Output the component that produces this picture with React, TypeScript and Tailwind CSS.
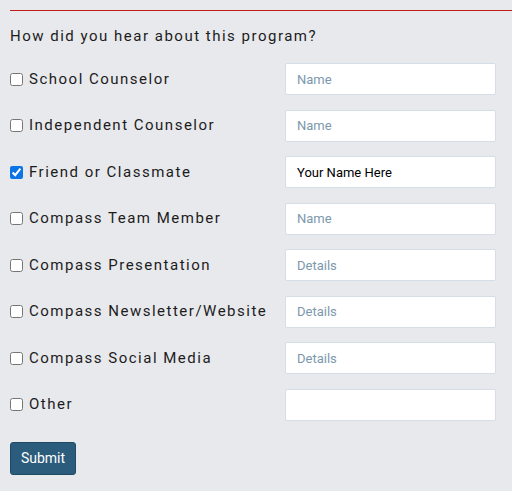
import React from "react";

const rows = [
  { label: "School Counselor", placeholder: "Name", value: "", checked: false },
  { label: "Independent Counselor", placeholder: "Name", value: "", checked: false },
  { label: "Friend or Classmate", placeholder: "Name", value: "Your Name Here", checked: true },
  { label: "Compass Team Member", placeholder: "Name", value: "", checked: false },
  { label: "Compass Presentation", placeholder: "Details", value: "", checked: false },
  { label: "Compass Newsletter/Website", placeholder: "Details", value: "", checked: false },
  { label: "Compass Social Media", placeholder: "Details", value: "", checked: false },
  { label: "Other", placeholder: "", value: "", checked: false },
];

export default function App() {
  return (
    <div
      className="w-[512px] h-[491px] bg-[#e8e9ed] pl-[10px] pt-[10px] text-[#1c1c1c]"
      style={{ fontFamily: "Roboto, 'Liberation Sans', sans-serif" }}
    >
      <div className="border-t border-[#c41a1a]" />
      <p className="mt-[15px] text-[15px] leading-[20px] tracking-[1.5px]">
        How did you hear about this program?
      </p>
      <div className="mt-[17px] flex flex-col gap-[14.5px] pr-[16px]">
        {rows.map((r) => (
          <div key={r.label} className="flex items-center justify-between">
            <label className="flex items-center gap-[6px] text-[15px] tracking-[1.5px]">
              <input
                type="checkbox"
                defaultChecked={r.checked}
                className="m-0 w-[13px] h-[13px] accent-[#0b75e6]"
              />
              {r.label}
            </label>
            <input
              type="text"
              placeholder={r.placeholder}
              defaultValue={r.value}
              className="w-[211px] h-[32px] bg-white border border-[#d5dde6] rounded-[2px] px-[11px] text-[13px] text-black placeholder:text-[#7c98ad] outline-none"
            />
          </div>
        ))}
      </div>
      <button className="mt-[21px] w-[66px] h-[33px] rounded-[3px] bg-[#2b5c7b] border border-[#1f4a66] text-white text-[14px]">
        Submit
      </button>
    </div>
  );
}
